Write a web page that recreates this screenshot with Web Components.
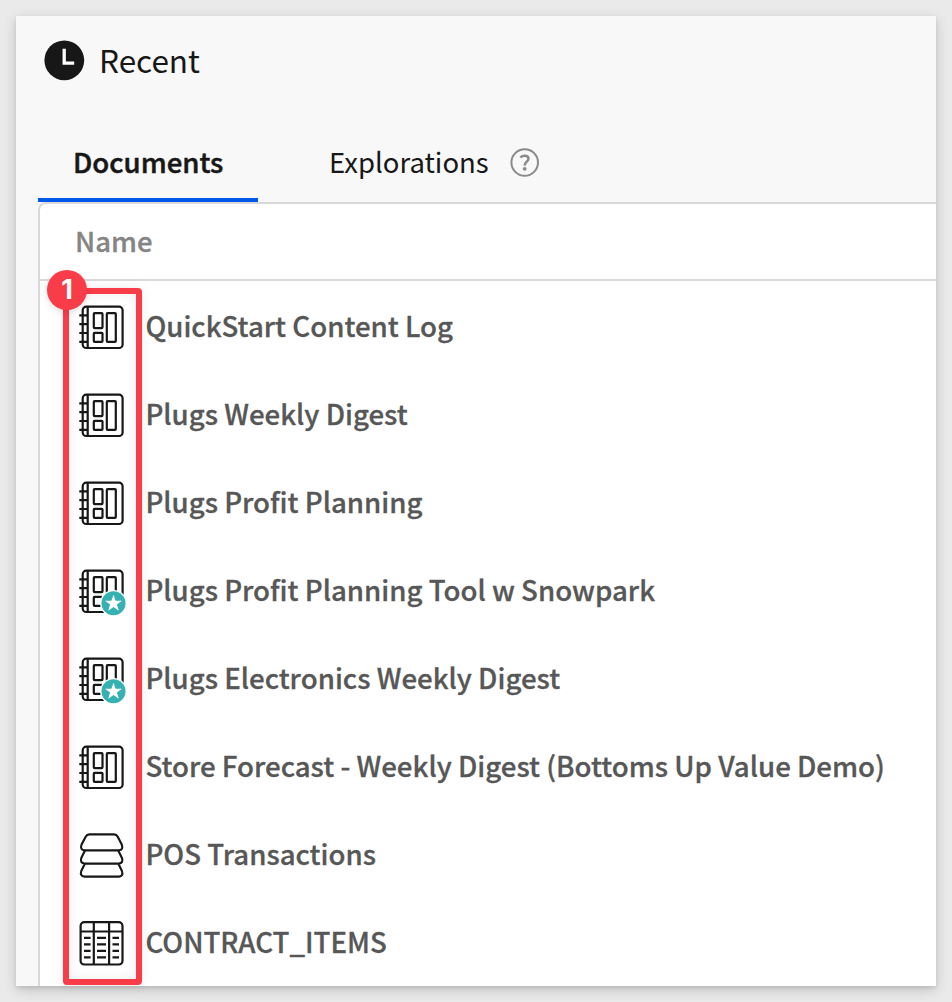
<!DOCTYPE html>
<html lang="en">
<head>
<meta charset="utf-8">
<title>Recent</title>
<style>
html,body{margin:0;height:100%;background:#eaeaea;overflow:hidden}
body{font-family:"Noto Sans CJK SC","Noto Sans",sans-serif;color:#171717}
</style>
</head>
<body>
<recent-panel>
  <panel-heading slot="heading">Recent</panel-heading>
  <tab-bar slot="tabs">
    <tab-item active>Documents</tab-item>
    <tab-item help>Explorations</tab-item>
  </tab-bar>
  <doc-row icon="book">QuickStart Content Log</doc-row>
  <doc-row icon="book">Plugs Weekly Digest</doc-row>
  <doc-row icon="book">Plugs Profit Planning</doc-row>
  <doc-row icon="book" starred>Plugs Profit Planning Tool w Snowpark</doc-row>
  <doc-row icon="book" starred>Plugs Electronics Weekly Digest</doc-row>
  <doc-row icon="book">Store Forecast - Weekly Digest (Bottoms Up Value Demo)</doc-row>
  <doc-row icon="stack">POS Transactions</doc-row>
  <doc-row icon="table">CONTRACT_ITEMS</doc-row>
  <call-out slot="callout">1</call-out>
</recent-panel>
<script>
const define = (name, html) => customElements.define(name, class extends HTMLElement {
  connectedCallback() {
    if (this.shadowRoot) return;
    const t = document.createElement('template');
    t.innerHTML = typeof html === 'function' ? html(this) : html;
    this.attachShadow({mode: 'open'}).append(t.content.cloneNode(true));
  }
});

define('recent-panel', `<style>
:host{display:block;box-sizing:border-box;height:1002px;padding:16px}
.card{position:relative;display:flex;flex-direction:column;box-sizing:border-box;height:970px;padding-left:22px;background:#f8f8f8;box-shadow:0 4px 12px rgba(0,0,0,.18),0 2px 3px rgba(0,0,0,.08)}
.table{flex:1;min-height:0;overflow:hidden;background:#fff;border:2px solid #d9d9d9;border-right:0;border-bottom:0;border-radius:8px 0 0 0}
.head{box-sizing:border-box;height:77px;padding-left:35px;border-bottom:2px solid #d9d9d9;font-size:27.5px;line-height:72px;font-weight:500;color:#858585;-webkit-text-stroke:.3px}
.rows{padding-top:1px}
</style>
<div class="card"><slot name="heading"></slot><slot name="tabs"></slot>
<div class="table"><div class="head">Name</div><div class="rows"><slot></slot></div></div>
<slot name="callout"></slot></div>`);

define('panel-heading', `<style>
:host{display:flex;align-items:center;gap:14px;height:89px;padding-left:6px;font-size:31.5px;line-height:44px}
svg{display:block}
span{padding-bottom:4px}
</style>
<svg width="41" height="41" viewBox="0 0 41 41"><circle cx="20.3" cy="20.3" r="19.9" fill="#171717"/><path d="M20.2 8.7v14.5h10" fill="none" stroke="#fff" stroke-width="3.3"/></svg>
<span><slot></slot></span>`);

define('tab-bar', `<style>
:host{display:flex;gap:36px;height:97px;align-items:flex-end}
</style><slot></slot>`);

define('tab-item', el => `<style>
:host{display:flex;box-sizing:border-box;align-items:center;gap:21px;height:78px;padding:0 35px;border-bottom:4px solid transparent;font-size:27.5px;line-height:40px;white-space:nowrap}
:host([active]){width:220px;font-size:27.6px;font-weight:500;-webkit-text-stroke:.5px;border-color:#0059eb}
svg{display:block;flex:none;margin-top:2px}
</style><span><slot></slot></span>${el.hasAttribute('help') ? `
<svg width="30" height="30" viewBox="0 0 30 30" fill="none" stroke="#8a8a8a"><circle cx="14.7" cy="15.5" r="13.3" stroke-width="2"/><path d="M10.5 10.6C11.8 8.2 18.3 7.5 18.5 11.6c.1 2.9-4 3.3-3.8 7" stroke-width="2.5"/><circle cx="14.7" cy="21.8" r="1.9" fill="#8a8a8a" stroke="none"/></svg>` : ''}`);

define('doc-row', `<style>
:host{display:flex;align-items:center;gap:17.4px;height:88px;padding-left:37px;font-size:27.66px;line-height:40px;font-weight:500;color:#575757;white-space:nowrap}
span{-webkit-text-stroke:.3px;padding-bottom:3px}
</style><doc-icon></doc-icon><span><slot></slot></span>`);

const glyphs = {
book: `<rect x="5.7" y="2.6" width="39.9" height="41.4" rx="3.6"/><path d="M10.7 2.6V44M2.3 11.4h8M2.3 20.2h8M2.3 29h8M2.3 37.8h8"/><rect x="16.8" y="9.2" width="8.7" height="14.9" rx=".8"/><rect x="16.8" y="28.8" width="8.7" height="9" rx=".8"/><rect x="29.8" y="9.2" width="9" height="28.6" rx=".8"/>`,
stack: `<g transform="translate(.7 0) scale(.97 1)"><path d="M12 2.4h25.5q2.5 0 3.8 2.4l4.2 8q1.8 5.2-3.2 5.6H7.4q-5.4-.5-3.5-5.6l4.3-8Q9.5 2.4 12 2.4Z"/><path d="M7.5 18.4 3.7 26q-1.7 5 3.5 5.6h35.2q5-.7 3.2-5.6l-3.8-7.6M7.5 31.6 3.7 39q-1.7 5.2 3.5 5.7h35.2q5-.5 3.2-5.7l-3.8-7.4"/></g>`,
table: `<rect x="3.6" y="2.2" width="41.9" height="42.3" rx="3.8"/><path d="M3.6 11.5h41.9M16.8 2.2v42.3M32.1 2.2v42.3"/><path d="M7 17.9h6.6M7 24.4h6.6M7 30.9h6.6M7 37.4h6.6M20 17.9h9M20 24.4h9M20 30.9h9M20 37.4h9M35.5 17.9h6.5M35.5 24.4h6.5M35.5 30.9h6.5M35.5 37.4h6.5"/>`
};
customElements.define('doc-icon', class extends HTMLElement {
  connectedCallback() {
    const row = this.getRootNode().host;
    const star = row.hasAttribute('starred') ? `<g stroke="none"><circle cx="36.5" cy="35.3" r="13.4" fill="#fff"/><circle cx="36.5" cy="35.3" r="12" fill="#35b1b1"/><path d="m36.5 26.7 2.1 6 6.4.1-5.1 3.8 1.9 6.1-5.3-3.6-5.3 3.6 1.9-6.1-5.1-3.8 6.4-.1Z" fill="#fff"/></g>` : '';
    this.attachShadow({mode: 'open'}).innerHTML = `<style>:host{display:block;flex:none;width:51px;height:48px;padding-top:4px}svg{display:block;overflow:visible}</style><svg width="51" height="48" viewBox="0 0 51 48" fill="none" stroke="#171717" stroke-width="2.2">${glyphs[row.getAttribute('icon')]}${star}</svg>`;
  }
});

define('call-out', `<style>
:host{position:absolute;left:47px;top:272px;box-sizing:border-box;width:79px;height:697px;border:6px solid #f83c48;border-radius:4px;box-shadow:0 0 12px rgba(0,0,0,.08),inset 0 0 12px rgba(0,0,0,.08)}
b{position:absolute;left:-22px;top:-23.6px;width:40px;height:40px;border-radius:50%;background:#f83c48;color:#fff;text-align:center;font:700 27px/40px Inter,sans-serif;box-shadow:0 2px 6px rgba(0,0,0,.12)}
</style><b><slot></slot></b>`);
</script>
</body>
</html>
